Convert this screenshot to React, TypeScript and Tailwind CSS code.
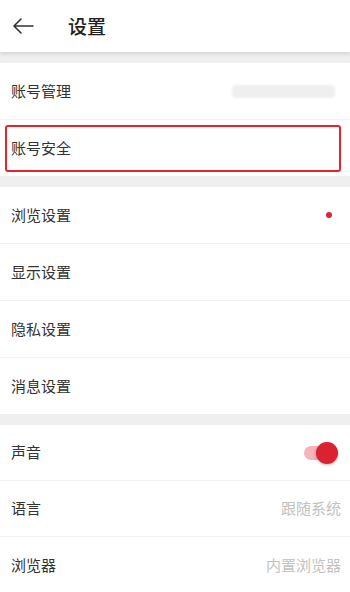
import type { ReactNode } from 'react'

const FONT = { fontFamily: '"Noto Sans CJK SC", "Noto Sans", sans-serif' }

function Band() {
  return <div className="h-[11px] bg-[#efefef]" />
}

function Row({ label, right, last, h = 'h-[57px]' }: { label: string; right?: ReactNode; last?: boolean; h?: string }) {
  return (
    <div className={`flex items-center justify-between pl-[11px] pr-[9px] ${h} ${last ? '' : 'border-b border-[#f3f3f3]'}`}>
      <span className="text-[15px] text-[#333]">{label}</span>
      {right}
    </div>
  )
}

function Hint({ children }: { children: ReactNode }) {
  return <span className="text-[15px] text-[#c2c2c2]">{children}</span>
}

export default function App() {
  return (
    <div className="h-[592px] w-[350px] overflow-hidden bg-white" style={FONT}>
      {/* Header */}
      <div className="relative z-10 flex h-[52px] items-center bg-white shadow-[0_2px_4px_rgba(0,0,0,0.12)]">
        <svg className="ml-[12px]" width="22" height="16" viewBox="0 0 22 16" fill="none" stroke="#333" strokeWidth="1.6" strokeLinecap="round" strokeLinejoin="round">
          <path d="M21 8H2M9 1L2 8l7 7" />
        </svg>
        <span className="ml-[34px] text-[19px] font-medium text-[#222]">设置</span>
      </div>
      <Band />

      {/* Account */}
      <Row
        label="账号管理"
        right={<div className="mr-[6px] h-[13px] w-[103px] rounded-sm bg-[#efefef] blur-[1px]" />}
      />
      <div className="h-[56px] pb-[4px] pl-[5px] pr-[9px] pt-[5px]">
        <div className="flex h-full items-center rounded-[3px] border-2 border-[#e5252b] pl-[4px]">
          <span className="text-[15px] text-[#333]">账号安全</span>
        </div>
      </div>
      <Band />

      <Row label="浏览设置" right={<span className="mr-[9px] h-[6px] w-[6px] rounded-full bg-[#e02433]" />} />
      <Row label="显示设置" />
      <Row label="隐私设置" />
      <Row label="消息设置" last h="h-[56px]" />
      <Band />

      <Row
        label="声音"
        right={
          <div className="relative mr-[3px] h-[22px] w-[34px]">
            <div className="absolute left-0 top-[4px] h-[14px] w-[26px] rounded-full bg-[#f4b4b8]" />
            <div className="absolute right-0 top-0 h-[22px] w-[22px] rounded-full bg-[#da2230] shadow-[0_1px_3px_rgba(0,0,0,0.3)]" />
          </div>
        }
        h="h-[56px]"
      />
      <Row label="语言" right={<Hint>跟随系统</Hint>} h="h-[56px]" />
      <Row label="浏览器" right={<Hint>内置浏览器</Hint>} last h="h-[56px]" />
    </div>
  )
}
